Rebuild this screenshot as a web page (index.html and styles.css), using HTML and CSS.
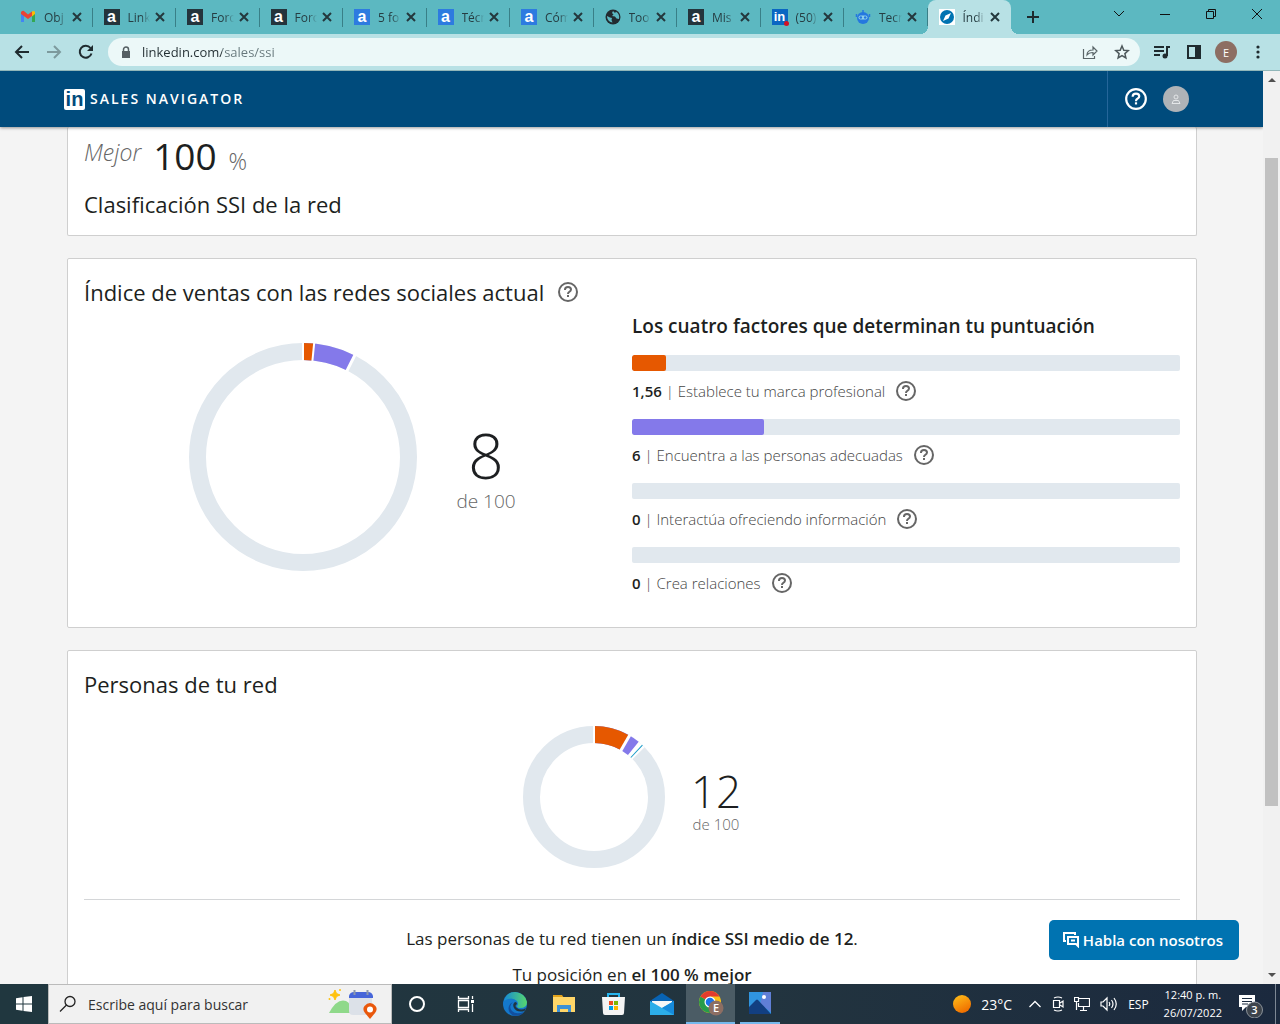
FILE: index.html
```html
<!DOCTYPE html>
<html lang="es">
<head>
<meta charset="utf-8">
<title>Índice de ventas con las redes sociales</title>
<link rel="stylesheet" href="styles.css">
</head>
<body>
<svg class="defs" aria-hidden="true">
  <symbol id="close" viewBox="0 0 10 10"><path d="M1 1l8 8M9 1L1 9" stroke="#24383d" stroke-width="2" fill="none"/></symbol>
  <symbol id="help" viewBox="0 0 22 22"><circle cx="11" cy="11" r="9" fill="none" stroke="currentColor" stroke-width="2"/><path d="M8 9V8.500Q8 6 11 6T14 8.500Q14 10 12.300 10.800Q11 11.400 11 13" fill="none" stroke="currentColor" stroke-width="2"/><path d="M10 14h2v2h-2z" fill="currentColor"/></symbol>
</svg>
<div class="window">
  <header class="tabstrip">
    <div class="tabs">
      <div class="tab"><svg class="favicon" viewBox="0 0 16 16"><path d="M1 13V4l3 2v7z" fill="#4285f4"/><path d="M12 6l3-2v9h-3z" fill="#34a853"/><path d="M1 5V3q2-2 3.500-.5L8 5.500l4-3V7L8 10 1 5z" fill="#ea4335"/><path d="M12 2.500Q14 1.500 15 3v2l-3 2.500z" fill="#fbbc04"/></svg><span class="tab-title">Obj</span><button class="close" aria-label="Cerrar"><svg><use href="#close"/></svg></button></div>
      <div class="tab"><span class="favicon letter dark">a</span><span class="tab-title">Link</span><button class="close" aria-label="Cerrar"><svg><use href="#close"/></svg></button></div>
      <div class="tab"><span class="favicon letter dark">a</span><span class="tab-title">Foro</span><button class="close" aria-label="Cerrar"><svg><use href="#close"/></svg></button></div>
      <div class="tab"><span class="favicon letter dark">a</span><span class="tab-title">Foro</span><button class="close" aria-label="Cerrar"><svg><use href="#close"/></svg></button></div>
      <div class="tab"><span class="favicon letter blue">a</span><span class="tab-title">5 fo</span><button class="close" aria-label="Cerrar"><svg><use href="#close"/></svg></button></div>
      <div class="tab"><span class="favicon letter blue">a</span><span class="tab-title">Técn</span><button class="close" aria-label="Cerrar"><svg><use href="#close"/></svg></button></div>
      <div class="tab"><span class="favicon letter blue">a</span><span class="tab-title">Cóm</span><button class="close" aria-label="Cerrar"><svg><use href="#close"/></svg></button></div>
      <div class="tab"><svg class="favicon" viewBox="0 0 16 16"><circle cx="8" cy="8" r="7.500" fill="#222b30"/><path d="M2 7l3 1.500 2 .5-.5 2 1 2.500-2-.5Q2 11 2 7zM8 2l-1 2 1.500 1.500L7 7l3 .5 1.500 2 2.500.5Q15 5 11 2.800L10 4z" fill="#5cb8c1"/></svg><span class="tab-title">Too</span><button class="close" aria-label="Cerrar"><svg><use href="#close"/></svg></button></div>
      <div class="tab"><span class="favicon letter dark">a</span><span class="tab-title">Mis</span><button class="close" aria-label="Cerrar"><svg><use href="#close"/></svg></button></div>
      <div class="tab"><span class="favicon letter in">in</span><span class="tab-title">(50)</span><button class="close" aria-label="Cerrar"><svg><use href="#close"/></svg></button></div>
      <div class="tab"><svg class="favicon" viewBox="0 0 16 16"><path d="M8 1v3M1.500 5v3M14.500 5v3" stroke="#2478df" stroke-width="1.500"/><circle cx="8" cy="9" r="6" fill="#2478df"/><rect x="3.500" y="6.500" width="9" height="4" rx="2" fill="#8fd0ea"/><circle cx="5.800" cy="8.500" r="1.300" fill="#2478df"/><circle cx="10.200" cy="8.500" r="1.300" fill="#2478df"/></svg><span class="tab-title">Tecn</span><button class="close" aria-label="Cerrar"><svg><use href="#close"/></svg></button></div>
      <div class="tab active"><svg class="favicon" viewBox="0 0 16 16"><path d="M0 0h16v16H0z" fill="#fff"/><circle cx="8" cy="8" r="7" fill="#0073b1"/><path d="M12 4l-2.500 5.500L4 12l2.500-5.500z" fill="#fff"/></svg><span class="tab-title">Índi</span><button class="close" aria-label="Cerrar"><svg><use href="#close"/></svg></button></div>
    </div>
    <button class="new-tab" aria-label="Nueva pestaña"><svg width="12" height="12" viewBox="0 0 12 12"><path d="M6 0v12M0 6h12" stroke="#1e2a2e" stroke-width="2"/></svg></button>
    <div class="window-controls">
      <button aria-label="Buscar pestañas"><svg width="12" height="12" viewBox="0 0 12 12"><path d="M1 3l5 5 5-5" fill="none" stroke="#111"/></svg></button>
      <button aria-label="Minimizar"><svg width="12" height="12" viewBox="0 0 12 12"><path d="M1 6.500h10" stroke="#111"/></svg></button>
      <button aria-label="Restaurar"><svg width="12" height="12" viewBox="0 0 12 12"><path d="M1.500 3.500h7v7h-7zM3.500 3V1.500h7v7H9" fill="none" stroke="#111"/></svg></button>
      <button aria-label="Cerrar ventana"><svg width="12" height="12" viewBox="0 0 12 12"><path d="M1 1l10 10M11 1L1 11" stroke="#111"/></svg></button>
    </div>
  </header>

  <div class="toolbar">
    <button class="tool" aria-label="Atrás"><svg width="16" height="16" viewBox="0 0 16 16"><path d="M15 8H2M8 2L2 8l6 6" fill="none" stroke="#1f2b2f" stroke-width="2"/></svg></button>
    <button class="tool" aria-label="Adelante"><svg width="16" height="16" viewBox="0 0 16 16"><path d="M1 8h13M8 2l6 6-6 6" fill="none" stroke="#7d9a9d" stroke-width="2"/></svg></button>
    <button class="tool" aria-label="Recargar"><svg width="16" height="16" viewBox="0 0 16 16"><path d="M13.500 9.500A6 6 0 1 1 12.500 4" fill="none" stroke="#1f2b2f" stroke-width="2"/><path d="M15 1v6H9z" fill="#1f2b2f"/></svg></button>
    <div class="omnibox">
      <svg width="10" height="12" viewBox="0 0 10 12"><path d="M1 5h8v7H1z" fill="#555f63"/><path d="M2.500 5V3.500a2.500 2.500 0 0 1 5 0V5" fill="none" stroke="#555f63" stroke-width="1.500"/></svg>
      <input class="url" type="text" value="linkedin.com/sales/ssi" aria-label="Dirección">
      <button class="plain" aria-label="Compartir"><svg width="16" height="16" viewBox="0 0 16 16"><path d="M1.500 5v9.500h11V12M5 11q0-5 6-5V3l4 4-4 4V8.500Q7 8.500 5 11z" fill="none" stroke="#5a6568" stroke-width="1.200"/></svg></button>
      <button class="plain" aria-label="Añadir a favoritos"><svg width="16" height="16" viewBox="0 0 16 16"><path d="M8 2l1.800 4.200 4.500.4-3.400 3 1 4.400L8 11.700 4.100 14l1-4.400-3.400-3 4.500-.4z" fill="none" stroke="#4d585b" stroke-width="1.500"/></svg></button>
    </div>
    <button class="extension" aria-label="Multimedia"><svg width="18" height="16" viewBox="0 0 18 16"><path d="M1 3h10M1 7h10M1 11h6M14 12V3h3" fill="none" stroke="#1f2b2f" stroke-width="2"/><circle cx="12" cy="12" r="2.500" fill="#1f2b2f"/></svg></button>
    <button class="extension" aria-label="Panel lateral"><svg width="16" height="16" viewBox="0 0 16 16"><path d="M2 2h12v12H2z" fill="none" stroke="#1f2b2f" stroke-width="2"/><path d="M9 2h5v12H9z" fill="#1f2b2f"/></svg></button>
    <button class="profile" aria-label="Perfil">E</button>
    <button class="menu" aria-label="Menú"><svg width="4" height="14" viewBox="0 0 4 14"><g fill="#1f2b2f"><circle cx="2" cy="2" r="1.600"/><circle cx="2" cy="7" r="1.600"/><circle cx="2" cy="12" r="1.600"/></g></svg></button>
  </div>

  <div class="viewport">
    <div class="page">
      <nav class="site-nav">
        <a class="brand" href="#"><span class="brand-mark">in</span><span class="brand-name">SALES NAVIGATOR</span></a>
        <div class="account">
          <button class="plain help" aria-label="Ayuda"><svg width="24" height="24"><use href="#help"/></svg></button>
          <button class="avatar" aria-label="Cuenta"><svg width="10" height="10" viewBox="0 0 10 10"><circle cx="5" cy="3" r="2" fill="none" stroke="#e4e6e8"/><path d="M1 9.500l1.500-3h5l1.500 3z" fill="none" stroke="#e4e6e8"/></svg></button>
        </div>
      </nav>
      <main class="cards">
        <section class="card rank">
          <p class="rank-value"><em>Mejor</em><strong>100</strong><span>%</span></p>
          <h2>Clasificación SSI de la red</h2>
        </section>

        <section class="card current">
          <div class="heading"><h2>Índice de ventas con las redes sociales actual</h2><button class="plain info" aria-label="Más información"><svg width="22" height="22"><use href="#help"/></svg></button></div>
          <div class="columns">
            <div class="score">
              <svg class="ring-large" viewBox="-114 -114 228 228">
                <g transform="rotate(-90)" fill="none" stroke-width="17">
                  <circle r="105.500" stroke="#e1e8ee"/>
                  <circle r="105.500" stroke="#8479ea" pathLength="100" stroke-dasharray="7.500 92.500"/>
                  <circle r="105.500" stroke="#e65800" pathLength="100" stroke-dasharray="1.560 98.440"/>
                </g>
                <g stroke="#fff" stroke-width="2"><path d="M0-95v-20"/><path d="M0-95v-20" transform="rotate(5.600)"/><path d="M0-95v-20" stroke-width="3" transform="rotate(27)"/></g>
              </svg>
              <p class="score-label"><strong>8</strong><span>de 100</span></p>
            </div>
            <div class="factors">
              <h3>Los cuatro factores que determinan tu puntuación</h3>
              <ul>
                <li><div class="bar"><div class="fill orange" style="width:6.24%"></div></div><p><b>1,56</b> | Establece tu marca profesional<button class="plain info" aria-label="Más información"><svg width="22" height="22"><use href="#help"/></svg></button></p></li>
                <li><div class="bar"><div class="fill violet" style="width:24%"></div></div><p><b>6</b> | Encuentra a las personas adecuadas<button class="plain info" aria-label="Más información"><svg width="22" height="22"><use href="#help"/></svg></button></p></li>
                <li><div class="bar"></div><p><b>0</b> | Interactúa ofreciendo información<button class="plain info" aria-label="Más información"><svg width="22" height="22"><use href="#help"/></svg></button></p></li>
                <li><div class="bar"></div><p><b>0</b> | Crea relaciones<button class="plain info" aria-label="Más información"><svg width="22" height="22"><use href="#help"/></svg></button></p></li>
              </ul>
            </div>
          </div>
        </section>

        <section class="card network">
          <h2>Personas de tu red</h2>
          <div class="score">
            <svg class="ring-small" viewBox="-71 -71 142 142">
              <g transform="rotate(-90)" fill="none" stroke-width="17">
                <circle r="62.500" stroke="#e1e8ee"/>
                <circle r="62.500" stroke="#fff" pathLength="360" stroke-dasharray="45.500 314.500"/>
                <circle r="62.500" stroke="#8479ea" pathLength="360" stroke-dasharray="39 321"/>
                <circle r="62.500" stroke="#e65800" pathLength="360" stroke-dasharray="29 331"/>
              </g>
              <path d="M0-54v-17" stroke="#1a9cc9" transform="rotate(43)"/>
              <g stroke="#fff" stroke-width="2"><path d="M0-52v-20"/><path d="M0-52v-20" stroke-width="3" transform="rotate(30)"/></g>
            </svg>
            <p class="score-label"><strong>12</strong><span>de 100</span></p>
          </div>
          <div class="summary">
            <p>Las personas de tu red tienen un <b>índice SSI medio de 12</b>.</p>
            <p>Tu posición en <b>el 100 % mejor</b></p>
          </div>
        </section>
      </main>
      <button class="chat"><svg width="16" height="16" viewBox="0 0 16 16"><path d="M3 9H1V1h11v2M5 5h10v9l-2-2H5zM8 8.500h4" fill="none" stroke="#fff" stroke-width="2"/></svg>Habla con nosotros</button>
    </div>
    <div class="scrollbar" aria-hidden="true">
      <svg width="17" height="17" viewBox="0 0 17 17"><path d="M5 11l4-4 4 4z" fill="#505050"/></svg>
      <div class="track"><div class="thumb"></div></div>
      <svg width="17" height="17" viewBox="0 0 17 17"><path d="M5 6l4 4 4-4z" fill="#505050"/></svg>
    </div>
  </div>

  <footer class="taskbar">
    <button class="start" aria-label="Inicio"><svg width="16" height="16" viewBox="0 0 16 16"><path d="M0 2.200l6.500-.9v6.200H0zM7.500 1.100L16 0v7.500H7.500zM0 8.500h6.500v6.200L0 13.800zM7.500 8.500H16V16l-8.500-1.100z" fill="#fff"/></svg></button>
    <label class="search">
      <svg width="18" height="18" viewBox="0 0 18 18"><circle cx="11" cy="6.500" r="5" fill="none" stroke="#222" stroke-width="1.300"/><path d="M7.500 10L1 16.500" stroke="#222" stroke-width="1.300"/></svg>
      <input type="text" placeholder="Escribe aquí para buscar" aria-label="Buscar">
      <svg width="50" height="32" viewBox="0 0 50 32"><path d="M1 25q8-15 17-12 5 2 6 12z" fill="#8fd98a"/><path d="M7 2l1.500 3.500L12 7l-3.500 1.500L7 12 5.500 8.500 2 7l3.500-1.500z" fill="#ffc20e" stroke="#ffc20e"/><circle cx="12" cy="2" r="1" fill="#ffc20e"/><circle cx="1.500" cy="11" r="1" fill="#ffc20e"/><rect x="21" y="5" width="23" height="22" rx="4" fill="#dce1e8"/><path d="M21 10V8q1-4 5-4h14q4 0 5 4v2z" fill="#4766d9"/><path d="M26.500 2v5M39.500 2v5" stroke="#8c98ac" stroke-width="2"/><path d="M42 31l-5-6q-3-4-.500-7t5.500-3 5.500 3-.500 7z" fill="#e9580c"/><circle cx="42" cy="21.500" r="3" fill="#fff"/></svg>
    </label>
    <div class="apps">
      <button aria-label="Cortana"><svg width="18" height="18" viewBox="0 0 18 18"><circle cx="9" cy="9" r="7" fill="none" stroke="#fff" stroke-width="2"/></svg></button>
      <button aria-label="Vista de tareas"><svg width="18" height="18" viewBox="0 0 18 18"><path d="M1.500 1v2.500h10V1M1.500 17v-2.500h10V17M1.500 5.500h10v7h-10zM15.500 1v3M15.500 9v8" fill="none" stroke="#fff" stroke-width="1.300"/><path d="M14 5h3v3h-3z" fill="#fff"/></svg></button>
      <button aria-label="Edge"><svg width="24" height="24" viewBox="0 0 24 24"><defs><linearGradient id="edge"><stop stop-color="#168bd4"/><stop offset="1" stop-color="#57d76d"/></linearGradient></defs><circle cx="12" cy="12" r="12" fill="#1478cc"/><path d="M1 9Q3 0 12 0q10 1 12 10 0 6-7 6-3 0-3-2 2-2 0-5Q9 4 1 9z" fill="url(#edge)"/><path d="M10 10q-5 4-1 9 4 4 12 1-4 5-11 3.500Q4 20 6 14q1-3 4-4z" fill="#1250a0"/><path d="M14 12q-3 2 0 4 4 3 9 0l-1.500 3Q14 21 11 16q-2-4 1-6 2 0 2 2z" fill="#203440"/></svg></button>
      <button aria-label="Explorador de archivos"><svg width="22" height="20" viewBox="0 0 22 20"><path d="M0 1h9l2 3H0z" fill="#e2a21b"/><path d="M0 3h22v15H0z" fill="#ffd668"/><path d="M4 18v-7h14v7h-3v-3H7v3z" fill="#3d91d6"/></svg></button>
      <button aria-label="Tienda"><svg width="24" height="24" viewBox="0 0 24 24"><path d="M7 6V2h11v4" fill="none" stroke="#26b4ee" stroke-width="2"/><path d="M1 5h23l-1 16q0 2-2 2H4q-2 0-2-2z" fill="#f4f4f4"/><path d="M8 9h4v4H8z" fill="#f04e22"/><path d="M13 9h4v4h-4z" fill="#7eb800"/><path d="M8 14h4v4H8z" fill="#009fe8"/><path d="M13 14h4v4h-4z" fill="#ffb800"/></svg></button>
      <button aria-label="Correo"><svg width="24" height="24" viewBox="0 0 24 24"><path d="M0 9l12-8 12 8v4H0z" fill="#0863b3"/><path d="M2 9h20v5l-10 5L2 14z" fill="#f7f7f7"/><path d="M0 9l12 7 12-7v14H0z" fill="#2caee9"/><path d="M24 9v14L12 16z" fill="#168bdc"/></svg></button>
      <button class="current-app" aria-label="Chrome"><svg width="26" height="28" viewBox="0 0 26 28"><circle cx="12" cy="13" r="11" fill="#fbc116"/><path d="M12 13L2.500 7.500A11 11 0 0 0 12 24l4.500-8z" fill="#279c4b"/><path d="M12 13L2.500 7.500A11 11 0 0 1 21.500 7.500H12z" fill="#e33b2e"/><circle cx="12" cy="13" r="5.500" fill="#fff"/><circle cx="12" cy="13" r="4.300" fill="#1a73e8"/><circle cx="18" cy="19" r="7.500" fill="#8d6e63"/><text class="badge-letter" x="18" y="23" text-anchor="middle">E</text></svg></button>
      <button class="open-app" aria-label="Fotos"><svg width="22" height="22" viewBox="0 0 22 22"><path d="M0 0h22v22H0z" fill="#3095df"/><path d="M14 0h8v20L11 12z" fill="#607fd6"/><path d="M0 15l7-7q1-1 2 0l13 14H0z" fill="#123f81"/><circle cx="15" cy="5" r="2" fill="#fff"/></svg></button>
    </div>
    <div class="tray">
      <svg class="sun" width="18" height="18" viewBox="0 0 18 18"><defs><linearGradient id="sun" x2=".5" y2="1"><stop stop-color="#ffc21a"/><stop offset="1" stop-color="#f07000"/></linearGradient></defs><circle cx="9" cy="9" r="9" fill="url(#sun)"/></svg>
      <span class="temp">23°C</span>
      <svg width="14" height="16" viewBox="0 0 14 16"><path d="M1.500 11L7 5.500l5.500 5.500" fill="none" stroke="#fff" stroke-width="1.300"/></svg>
      <svg width="12" height="16" viewBox="0 0 12 16"><path d="M2 2q4-2 8 0M2 14q4 2 8 0M1.500 4.500h6v7h-6zM8 7l3-2v6L8 9" fill="none" stroke="#fff" stroke-width="1.200"/></svg>
      <svg width="16" height="16" viewBox="0 0 16 16"><path d="M4 2.500h11.500v8H4.500V7M9.500 11v3M6 14.500h7M.5 1.500h4v4h-4zM2.500 6v8" fill="none" stroke="#fff" stroke-width="1.200"/></svg>
      <svg width="18" height="16" viewBox="0 0 18 16"><path d="M1 6h2l4-4v12l-4-4H1zM9 6q1.500 2 0 4M11.500 4q3 4 0 8M14 2q4.500 6 0 12" fill="none" stroke="#fff" stroke-width="1.200"/></svg>
      <span class="lang">ESP</span>
      <time class="clock"><span>12:40 p. m.</span><span>26/07/2022</span></time>
      <button class="notifications" aria-label="Notificaciones"><svg width="26" height="28" viewBox="0 0 26 28"><path d="M1 5h16v12h-9l-4 4v-4H1z" fill="#fff"/><path d="M4 8.500h10M4 11.500h10M4 14h6" stroke="#1b2b3f"/><circle cx="16.500" cy="20" r="8" fill="#3d444c" stroke="#8b929a"/><text class="badge-letter" x="16.500" y="24" text-anchor="middle">3</text></svg></button>
    </div>
    <button class="show-desktop" aria-label="Mostrar escritorio"></button>
  </footer>
</div>
</body>
</html>
```
FILE: styles.css
```css
* { box-sizing: border-box; }
body { margin: 0; font-family: "Open Sans", "Noto Sans", sans-serif; color: #1d1f21; }
h2, h3, p, ul { margin: 0; padding: 0; font-weight: 400; }
ul { list-style: none; }
button { font: inherit; border: 0; padding: 0; background: none; color: inherit; display: flex; align-items: center; justify-content: center; }
input { font: inherit; border: 0; padding: 0; background: none; min-width: 0; outline: 0; }
svg { flex: none; display: block; }
.defs { position: absolute; width: 0; height: 0; }

.window { display: flex; flex-direction: column; height: 100vh; overflow: hidden; }

/* Tab strip */
.tabstrip { display: flex; flex: none; height: 34px; background: #5cb8c1; padding-left: 9px; }
.tabs { display: flex; flex: 0 1 1002px; min-width: 0; }
.tab { position: relative; display: flex; flex: 1 1 0; min-width: 0; align-items: center; padding: 0 11px; font-size: 12px; }
.tab::after { content: ""; position: absolute; right: 0; top: 8px; width: 1px; height: 19px; background: #397f87; }
.favicon { width: 16px; height: 16px; flex: none; }
.letter { font: bold 16px/15px "Liberation Sans", sans-serif; color: #fff; text-align: center; }
.dark { background: #24343c; }
.blue { background: #2d7be0; }
.in { position: relative; background: #0a66c2; font-size: 13px; line-height: 16px; }
.in::after { content: ""; position: absolute; right: -1px; bottom: -1px; width: 5px; height: 5px; border-radius: 50%; background: #d11124; }
.tab-title { flex: 1 1 0; min-width: 0; margin-left: 8px; white-space: nowrap; color: #263d42; -webkit-mask-image: linear-gradient(90deg, #000 60%, transparent); mask-image: linear-gradient(90deg, #000 60%, transparent); }
.close { margin-left: 5px; }
.close svg { width: 10px; height: 10px; }
.tab.active { background: #b8e1e5; border-radius: 8px 8px 0 0; }
.tab.active::before, .tab.active::after { content: ""; position: absolute; top: auto; bottom: 0; width: 8px; height: 8px; }
.tab.active::before { left: -8px; background: radial-gradient(circle at 0 0, #5cb8c1 8px, #b8e1e5 8px); }
.tab.active::after { right: -8px; background: radial-gradient(circle at 100% 0, #5cb8c1 8px, #b8e1e5 8px); }
.new-tab { width: 44px; flex: none; }
.window-controls { display: flex; flex: none; margin-left: auto; height: 28px; }
.window-controls button { width: 46px; }

/* Toolbar */
.toolbar { display: flex; flex: none; align-items: center; height: 37px; padding: 0 14px 0 6px; background: #b8e1e5; border-bottom: 1px solid #90b6b9; }
.tool { width: 32px; height: 32px; }
.omnibox { display: flex; flex: 1; align-items: center; gap: 16px; height: 28px; margin: 0 6px; padding: 0 10px 0 13px; border-radius: 14px; background: #ecf8f8; font-size: 13px; }
.url { flex: 1; margin-left: -5px; color: transparent; background: linear-gradient(90deg, #222e32 80px, #66777b 80px); -webkit-background-clip: text; background-clip: text; }
.extension { width: 32px; height: 32px; }
.extension + .extension { margin-right: 5px; }
.profile { width: 22px; height: 22px; border-radius: 50%; background: #8d6e63; color: #fff; font-size: 11px; }
.menu { width: 16px; height: 32px; margin-left: 13px; }

/* Page viewport */
.viewport { display: flex; flex: 1; min-height: 0; }
.page { position: relative; flex: 1; min-width: 0; overflow: hidden; background: #f4f4f4; }
.scrollbar { display: flex; flex: none; flex-direction: column; width: 17px; background: #f1f1f1; }
.track { flex: 1; padding: 70px 2px 161px; }
.thumb { height: 100%; background: #c1c1c1; }

.site-nav { position: relative; display: flex; align-items: center; justify-content: space-between; height: 56px; padding: 0 74px 0 64px; background: #004b7c; color: #fff; box-shadow: 0 1px 3px rgba(0, 0, 0, .4); }
.brand { display: flex; align-items: center; gap: 5px; color: #fff; text-decoration: none; }
.brand-mark { width: 21px; height: 21px; border-radius: 2px; background: #fff; color: #004b7c; font: bold 20px/20px "Liberation Sans", sans-serif; text-align: center; }
.brand-name { font-size: 14px; font-weight: 600; letter-spacing: 2px; line-height: 20px; }
.account { display: flex; align-items: center; align-self: stretch; gap: 15px; padding-left: 16px; border-left: 1px solid #25669a; }
.avatar { width: 26px; height: 26px; border-radius: 50%; background: #afb3b7; }

.cards { display: flex; flex-direction: column; gap: 22px; padding: 0 66px 24px 67px; }
.card { padding: 17px 16px; background: #fff; border: 1px solid #cfcfcf; border-radius: 2px; }
.card h2 { font-size: 22px; line-height: 32px; font-weight: 400; }
.card.rank { padding-top: 7px; padding-bottom: 15px; border-top: 0; }
.rank-value { display: flex; align-items: baseline; height: 54px; line-height: 44px; color: #666; font-weight: 300; }
.rank-value em { align-self: flex-start; font-size: 23px; line-height: 36px; }
.rank-value strong { margin: 0 12px; font-size: 37px; font-weight: 400; color: #1d1f21; }
.rank-value span { font-size: 23px; }
.heading { display: flex; align-items: center; gap: 13px; }
.plain { flex: none; }
.info { color: #666; }
.card.current { padding-bottom: 32px; }
.columns { display: grid; grid-template-columns: 1fr 1fr; }
.score { display: flex; align-items: center; justify-content: center; }
.current .score { gap: 39px; padding-right: 11px; align-self: start; padding-top: 35px; }
.ring-large { width: 228px; height: 228px; }
.ring-small { width: 142px; height: 142px; }
.score-label { display: flex; flex-direction: column; align-items: center; font-weight: 300; color: #666; }
.score-label strong { font-weight: 300; color: #1d1f21; }
.current .score-label { padding-top: 24px; font-size: 19px; line-height: 28px; }
.current .score-label strong { font-size: 62px; line-height: 64px; }
.factors h3 { font-size: 19px; line-height: 36px; font-weight: 600; margin-bottom: 11px; }
.bar { height: 16px; border-radius: 2px; background: #e1e8ee; overflow: hidden; }
.fill { height: 100%; border-radius: 2px; }
.orange { background: #e65800; }
.violet { background: #8479ea; }
.factors p { display: flex; align-items: center; height: 24px; margin: 8px 0 16px; font-size: 15px; font-weight: 300; color: #444; white-space: pre; }
.factors li:last-child p { margin-bottom: 0; }
.factors b { font-weight: 600; color: #1d1f21; }
.factors .info { margin-left: 10px; }
.network .score { gap: 26px; padding: 26px 0 31px; border-bottom: 1px solid #d4d6d8; }
.network .score-label { padding-top: 8px; font-size: 15px; line-height: 20px; }
.network .score-label strong { font-size: 44px; line-height: 46px; }
.summary { display: flex; flex-direction: column; gap: 12px; padding-top: 27px; text-align: center; font-size: 17px; line-height: 24px; font-weight: 300; }
.summary b { font-weight: 600; }
.chat { position: absolute; right: 24px; bottom: 24px; gap: 4px; height: 40px; padding: 0 16px 0 14px; border-radius: 5px; background: #0073b1; color: #fff; font-size: 15px; font-weight: 600; }

/* Taskbar */
.taskbar { display: flex; flex: none; height: 40px; background: linear-gradient(90deg, #20373f, #22343f 60%, #1b293e); color: #fff; }
.start { width: 48px; }
.search { display: flex; align-items: center; flex: 0 1 344px; padding: 0 13px 0 10px; background: #f1f1f1; border: 1px solid #bbb; }
.search input { flex: 1; margin-left: 11px; font-size: 14px; color: #333; }
.search input::placeholder { color: #333; opacity: 1; }
.apps { display: flex; }
.apps button { width: 49px; }
.apps .current-app { background: #4b5c65; border-bottom: 2px solid #76b9ed; }
.apps .open-app { border-bottom: 2px solid #76b9ed; width: 40px; margin-left: 5px; }
.badge-letter { font-size: 11px; font-weight: 600; fill: #fff; }
.tray { display: flex; align-items: center; gap: 10px; margin-left: auto; padding-right: 11px; font-size: 12px; }
.temp { margin-right: 6px; font-size: 14px; }
.clock { display: flex; flex-direction: column; align-items: center; margin: 0 6px 0 5px; line-height: 18px; font-size: 11px; }
.show-desktop { width: 5px; border-left: 1px solid #7d8794; }
```
